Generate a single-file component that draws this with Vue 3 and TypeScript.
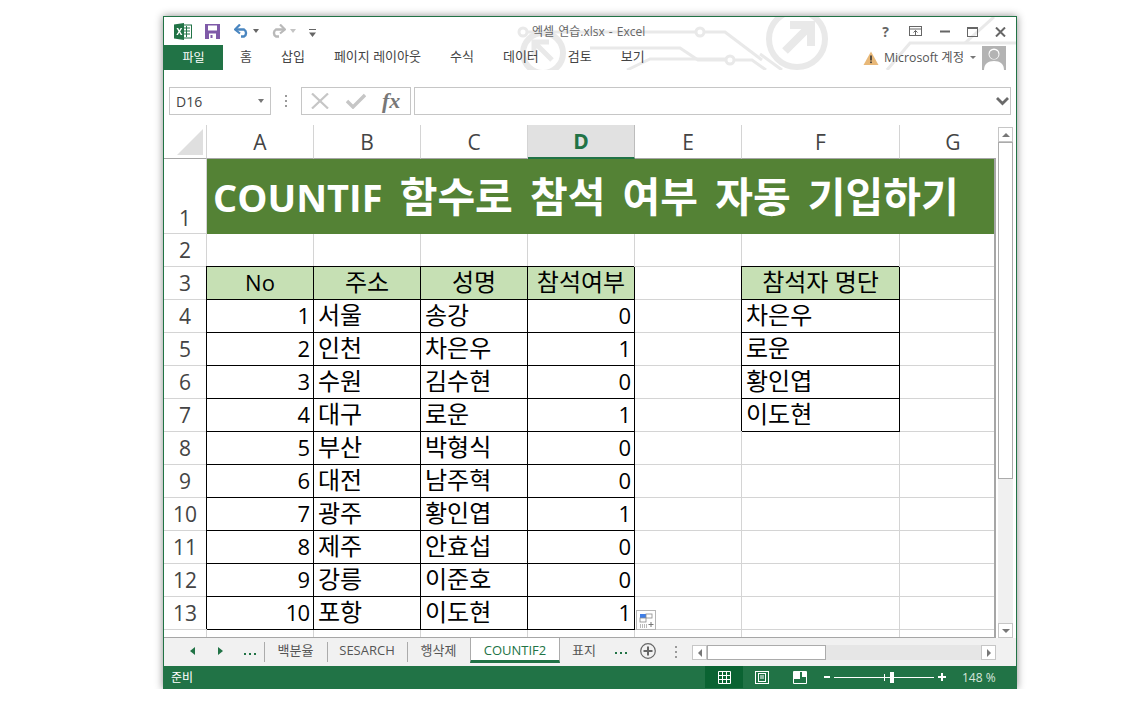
<template>
  <div class="page">
    <div class="window">
      <svg class="circuit" width="852" height="53" viewBox="164 17 852 53" fill="none" stroke="#e9e9e9">
        <g stroke-width="3">
          <circle cx="523" cy="32" r="4" />
          <path d="M527 32H696" />
          <circle cx="700" cy="32" r="4" />
          <path d="M704 32H725L762 60" />
          <path d="M590 48H680L698 60H726" />
          <circle cx="730" cy="60" r="4" />
          <path d="M734 60H752L766 70" />
          <path d="M627 70L650 59H726" />
          <path d="M887 70L910 43H1016" />
          <path d="M965 43L994 17" />
          <path d="M760 54L782 70" />
        </g>
        <circle cx="543" cy="53" r="20" stroke-width="6" />
        <path d="M552 60L536 44M534 56V42H549" stroke-width="5" />
        <circle cx="797" cy="39" r="28" stroke-width="6" />
        <path d="M785 51L809 27M790 25H811V46" stroke-width="8" />
      </svg>

      <div class="titlebar">
        <div class="quick">
          <svg class="ico-xl" width="18" height="17" viewBox="0 0 18 17">
            <rect x="7" y="2" width="10.5" height="13" fill="#fff" stroke="#217346" />
            <path d="M10 5h6M10 8h6M10 11h6M12.5 3v11" stroke="#217346" />
            <path d="M0 1.5L10 0v17L0 15.5z" fill="#217346" />
            <path d="M2.5 5l2 3.4-2.2 3.6h1.6l1.4-2.5 1.4 2.5h1.7L6.2 8.4 8.2 5H6.6L5.4 7.2 4.2 5z" fill="#fff" />
          </svg>
          <svg class="ico-save" width="15" height="15" viewBox="0 0 15 15">
            <path d="M0 0h15v15H0z" fill="#7f5aa8" />
            <rect x="3" y="1.5" width="9" height="5" fill="#fff" />
            <rect x="4" y="9.5" width="7" height="5.5" fill="#fff" />
            <rect x="5.5" y="11" width="2" height="3" fill="#7f5aa8" />
          </svg>
          <svg class="ico-undo" width="16" height="14" viewBox="0 0 16 14" fill="none">
            <path d="M2 5.500H10A4 4 0 0 1 10 12.500H7" stroke="#4a86c0" stroke-width="2.400" />
            <path d="M6 0.500L1 5.500L6 9.500" stroke="#4a86c0" stroke-width="2.200" />
          </svg>
          <span class="caret dark"></span>
          <svg class="ico-redo" width="16" height="14" viewBox="0 0 16 14" fill="none">
            <path d="M14 5.500H6A4 4 0 0 0 6 12.500H9" stroke="#b9b9b9" stroke-width="2.400" />
            <path d="M10 0.500L15 5.500L10 9.500" stroke="#b9b9b9" stroke-width="2.200" />
          </svg>
          <span class="caret light"></span>
          <svg class="ico-more" width="7" height="8" viewBox="0 0 7 8">
            <path d="M0 0h7v1H0zM0 3.500h7L3.500 8z" fill="#666" />
          </svg>
        </div>
        <div class="doc-title">엑셀 연습.xlsx - Excel</div>
        <div class="winbtns">
          <span class="help">?</span>
          <svg width="14" height="11" viewBox="0 0 14 11" fill="none" stroke="#666">
            <rect x="0.500" y="0.500" width="12" height="9" />
            <path d="M0.500 3H12.500" />
            <path d="M6.500 9V4.500M4.500 6.500l2-2 2 2" />
          </svg>
          <svg width="10" height="3" viewBox="0 0 10 3"><rect width="10" height="2" y="0.500" fill="#666" /></svg>
          <svg width="11" height="10" viewBox="0 0 11 10" fill="none" stroke="#666">
            <rect x="0.500" y="0.500" width="10" height="9" />
            <path d="M0 1.500H11" />
          </svg>
          <svg width="11" height="10" viewBox="0 0 11 10" fill="none" stroke="#666" stroke-width="2">
            <path d="M1 0.500L10 9.500M10 0.500L1 9.500" />
          </svg>
        </div>
      </div>

      <div class="ribbon">
        <div class="file-tab">파일</div>
        <div class="ribbon-tabs">
          <span v-for="t in ribbonTabs" :key="t">{{ t }}</span>
        </div>
        <div class="account">
          <svg width="16" height="14" viewBox="0 0 16 14">
            <path d="M8 0.500L15.500 14H0.500z" fill="#e8b878" />
            <rect x="7.200" y="4.500" width="1.600" height="5" fill="#333" />
            <rect x="7.200" y="10.500" width="1.600" height="1.600" fill="#333" />
          </svg>
          <span class="acc-name">Microsoft 계정</span>
          <span class="caret small"></span>
          <svg class="avatar" width="24" height="24" viewBox="0 0 24 24">
            <rect width="24" height="24" fill="#b3b3b3" />
            <circle cx="12" cy="8" r="5.500" fill="#fff" />
            <path d="M2 24c0-6 4-9 10-9s10 3 10 9z" fill="#fff" />
            <circle cx="12" cy="8.500" r="4.500" fill="#b3b3b3" />
          </svg>
        </div>
      </div>

      <div class="formula">
        <div class="namebox">
          <span>D16</span>
          <span class="caret"></span>
        </div>
        <div class="grip"><i></i><i></i><i></i></div>
        <div class="fbtns">
          <svg width="18" height="16" viewBox="0 0 18 16" fill="none" stroke="#c6c6c6" stroke-width="2.200">
            <path d="M1 0.500L17 15.500M17 0.500L1 15.500" />
          </svg>
          <svg width="20" height="16" viewBox="0 0 20 16" fill="none" stroke="#c6c6c6" stroke-width="3.400">
            <path d="M1 8L7 14L19 2" />
          </svg>
          <span class="fx">fx</span>
        </div>
        <div class="finput">
          <svg width="13" height="9" viewBox="0 0 13 9" fill="none" stroke="#6a6a6a" stroke-width="2.800">
            <path d="M1 1L6.500 6.500L12 1" />
          </svg>
        </div>
      </div>

      <div class="middle">
        <div class="sheet">
          <div class="row head">
            <div class="corner"><span class="tri"></span></div>
            <div v-for="c in columns" :key="c" class="colhead" :class="{ sel: c === 'D' }">{{ c }}</div>
          </div>

          <div class="row title-row">
            <div class="rowhead bottom">1</div>
            <div class="title-cell"><span class="title-latin">COUNTIF</span> 함수로 참석 여부 자동 기입하기</div>
          </div>

          <div v-for="r in rows" :key="r.n" class="row">
            <div class="rowhead">{{ r.n }}</div>
            <div
              v-for="(c, i) in r.cells"
              :key="i"
              class="cell"
              :class="[c.kind, { boxed: c.boxed }]"
            >{{ c.text }}</div>
          </div>

          <div class="row last">
            <div class="rowhead"></div>
            <div v-for="c in columns" :key="c" class="cell"></div>
          </div>

          <div class="edge"></div>

          <div class="paste">
            <svg width="17" height="17" viewBox="0 0 17 17">
              <rect x="2" y="2" width="6" height="4" fill="#3f7fe8" />
              <rect x="8" y="2" width="6" height="4" fill="#fff" stroke="#8a8a8a" stroke-width="0.800" />
              <rect x="2" y="6" width="6" height="4" fill="#fff" stroke="#8a8a8a" stroke-width="0.800" />
              <path d="M2 13h1M4 13h1M6 13h1M8 13h1M2 15h1M4 15h1M6 15h1M8 15h1" stroke="#777" />
              <path d="M13 10v5M10.500 12.500h5" stroke="#777" />
            </svg>
          </div>
        </div>

        <div class="vscroll">
          <div class="sbtn"><span class="tri-up"></span></div>
          <div class="vthumb"></div>
          <div class="vtrack"></div>
          <div class="sbtn"><span class="tri-down"></span></div>
        </div>
      </div>

      <div class="tabbar">
        <div class="tab-nav">
          <span class="nav-l"></span>
          <span class="nav-r"></span>
          <span class="dots"><i></i><i></i><i></i></span>
        </div>
        <div
          v-for="t in sheets"
          :key="t.name"
          class="sheet-tab"
          :class="{ active: t.active, plain: t.plain }"
          :style="{ width: t.w + 'px' }"
        >{{ t.name }}</div>
        <span class="dots after"><i></i><i></i><i></i></span>
        <svg class="plus" width="16" height="16" viewBox="0 0 16 16" fill="none" stroke="#666">
          <circle cx="8" cy="8" r="7.300" stroke-width="1.200" />
          <path d="M8 3.500v9M3.500 8h9" stroke-width="2" />
        </svg>
        <div class="grip tabgrip"><i></i><i></i><i></i></div>
        <div class="hscroll">
          <div class="sbtn h"><span class="tri-left"></span></div>
          <div class="hthumb"></div>
          <div class="htrack"></div>
          <div class="sbtn h"><span class="tri-right"></span></div>
        </div>
      </div>

      <div class="status">
        <span class="ready">준비</span>
        <div class="views">
          <div class="view on">
            <svg width="13" height="13" viewBox="0 0 13 13" fill="none" stroke="#fff">
              <path d="M0.500 0.500h12v12h-12zM0.500 4.500h12M0.500 8.500h12M4.500 0.500v12M8.500 0.500v12" />
            </svg>
          </div>
          <div class="view">
            <svg width="14" height="13" viewBox="0 0 14 13" fill="none" stroke="#fff">
              <rect x="0.500" y="0.500" width="13" height="12" />
              <rect x="3.500" y="2.500" width="7" height="8" />
              <path d="M5 5h4M5 7h4" />
            </svg>
          </div>
          <div class="view">
            <svg width="14" height="13" viewBox="0 0 14 13">
              <path d="M0.500 0.500h13v12h-13z" fill="none" stroke="#fff" />
              <path d="M1 0h6v8H1zM9 0h4v6H9z" fill="#fff" />
            </svg>
          </div>
        </div>
        <div class="zoom">
          <span class="zbtn minus"></span>
          <div class="slider"><i class="tick"></i><i class="knob"></i></div>
          <span class="zbtn pluss"></span>
          <span class="pct">148 %</span>
        </div>
      </div>
    </div>
  </div>
</template>

<script setup lang="ts">
type Cell = { text: string; kind?: string; boxed?: boolean }

const ribbonTabs = ['홈', '삽입', '페이지 레이아웃', '수식', '데이터', '검토', '보기']
const columns = ['A', 'B', 'C', 'D', 'E', 'F', 'G']

const people = [
  ['서울', '송강', 0],
  ['인천', '차은우', 1],
  ['수원', '김수현', 0],
  ['대구', '로운', 1],
  ['부산', '박형식', 0],
  ['대전', '남주혁', 0],
  ['광주', '황인엽', 1],
  ['제주', '안효섭', 0],
  ['강릉', '이준호', 0],
  ['포항', '이도현', 1],
] as const

const attendees = ['차은우', '로운', '황인엽', '이도현']

const blank = (): Cell => ({ text: '' })

const rows: { n: number; cells: Cell[] }[] = [
  { n: 2, cells: columns.map(blank) },
  {
    n: 3,
    cells: [
      { text: 'No', kind: 'hd latin', boxed: true },
      { text: '주소', kind: 'hd', boxed: true },
      { text: '성명', kind: 'hd', boxed: true },
      { text: '참석여부', kind: 'hd', boxed: true },
      blank(),
      { text: '참석자 명단', kind: 'hd', boxed: true },
      blank(),
    ],
  },
  ...people.map((p, i) => ({
    n: i + 4,
    cells: [
      { text: String(i + 1), kind: 'num', boxed: true },
      { text: p[0], boxed: true },
      { text: p[1], boxed: true },
      { text: String(p[2]), kind: 'num', boxed: true },
      blank(),
      attendees[i] ? { text: attendees[i], boxed: true } : blank(),
      blank(),
    ],
  })),
]

const sheets = [
  { name: '백분율', w: 63 },
  { name: 'SESARCH', w: 80 },
  { name: '행삭제', w: 63 },
  { name: 'COUNTIF2', w: 90, active: true },
  { name: '표지', w: 48, plain: true },
]
</script>

<style scoped>
.page {
  padding: 16px 0 0 163px;
  font-family: "Open Sans", "Noto Sans CJK KR", sans-serif;
}

.window {
  position: relative;
  width: 854px;
  height: 673px;
  box-sizing: border-box;
  border: 1px solid #217346;
  background: #fff;
  box-shadow: 0 0 8px rgba(0, 0, 0, 0.45);
  display: flex;
  flex-direction: column;
}

.circuit {
  position: absolute;
  left: 0;
  top: 0;
}

.titlebar {
  position: relative;
  height: 28px;
  flex: none;
  display: flex;
  align-items: center;
}

.quick {
  display: flex;
  align-items: center;
  padding-left: 10px;
  width: 340px;
}

.ico-save {
  margin-left: 13px;
}

.ico-undo {
  margin-left: 14px;
}

.ico-redo {
  margin-left: 11px;
}

.ico-more {
  margin-left: 13px;
  margin-top: 3px;
}

.caret {
  width: 0;
  height: 0;
  border-left: 3.500px solid transparent;
  border-right: 3.500px solid transparent;
  border-top: 4px solid #777;
}

.caret.dark {
  margin-left: 3px;
  border-top-color: #666;
}

.caret.light {
  margin-left: 4px;
  border-top-color: #c4c4c4;
}

.caret.small {
  margin-left: 6px;
  border-left-width: 3px;
  border-right-width: 3px;
  border-top-width: 3px;
}

.doc-title {
  position: absolute;
  left: 368px;
  top: 7px;
  font-size: 12px;
  line-height: 16px;
  word-spacing: 1px;
  color: #666;
  white-space: nowrap;
}

.winbtns {
  position: absolute;
  right: 10px;
  top: 8px;
  display: flex;
  align-items: center;
  gap: 17px;
}

.help {
  font-size: 14px;
  font-weight: 700;
  color: #666;
  line-height: 13px;
  margin-right: 3px;
}

.ribbon {
  position: relative;
  height: 25px;
  flex: none;
  display: flex;
  align-items: center;
}

.file-tab {
  width: 59px;
  height: 25px;
  background: #217346;
  color: #fff;
  font-size: 12px;
  line-height: 25px;
  text-align: center;
  flex: none;
}

.ribbon-tabs {
  display: flex;
  gap: 29px;
  padding-left: 17px;
  margin-top: -4px;
  font-size: 13px;
  color: #444;
  white-space: nowrap;
}

.account {
  position: absolute;
  right: 10px;
  top: 0;
  height: 25px;
  display: flex;
  align-items: center;
  font-size: 12.300px;
  color: #555;
}

.acc-name {
  margin-left: 5px;
  margin-top: -2px;
}

.avatar {
  margin-left: 6px;
}

.formula {
  flex: none;
  height: 28px;
  margin-top: 17px;
  display: flex;
  align-items: stretch;
  padding-left: 5px;
}

.namebox {
  width: 102px;
  box-sizing: border-box;
  border: 1px solid #c6c6c6;
  display: flex;
  align-items: center;
  justify-content: space-between;
  padding: 0 6px;
  font-size: 14px;
  color: #444;
}

.grip {
  display: flex;
  flex-direction: column;
  justify-content: center;
  align-items: center;
  gap: 3px;
  width: 30px;
}

.grip i {
  width: 2px;
  height: 2px;
  background: #9a9a9a;
}

.fbtns {
  width: 110px;
  box-sizing: border-box;
  border: 1px solid #c6c6c6;
  display: flex;
  align-items: center;
  gap: 17px;
  padding-left: 9px;
}

.fx {
  font-family: "Liberation Serif", serif;
  font-style: italic;
  font-weight: 700;
  font-size: 22px;
  line-height: 22px;
  color: #777;
  margin-left: -1px;
}

.finput {
  width: 597px;
  margin-left: 3px;
  box-sizing: border-box;
  border: 1px solid #c6c6c6;
  display: flex;
  align-items: center;
  justify-content: flex-end;
  padding-right: 1px;
}

.middle {
  flex: none;
  height: 513px;
  margin-top: 10px;
  display: flex;
}

.sheet {
  position: relative;
  width: 832px;
  flex: none;
  height: 513px;
  box-sizing: border-box;
  border-bottom: 1px solid #a6a6a6;
  overflow: hidden;
}

.edge {
  position: absolute;
  right: 0;
  top: 33px;
  bottom: 0;
  width: 2px;
  background: #a6a6a6;
}

.row {
  display: grid;
  grid-template-columns: 43px repeat(5, 107px) 158px 107px;
  height: 33px;
}

.row.head {
  height: 34px;
}

.row.last {
  height: 9px;
}

.corner {
  position: relative;
  border-right: 1px solid #d4d4d4;
  border-bottom: 1px solid #a6a6a6;
}

.tri {
  position: absolute;
  right: 3px;
  bottom: 3px;
  width: 0;
  height: 0;
  border-left: 26px solid transparent;
  border-bottom: 26px solid #dfdfdf;
}

.colhead {
  box-sizing: border-box;
  border-right: 1px solid #d4d4d4;
  border-bottom: 1px solid #a6a6a6;
  font-size: 21px;
  color: #444;
  display: flex;
  align-items: center;
  justify-content: center;
}

.colhead.sel {
  background: #e1e1e1;
  color: #217346;
  font-weight: 700;
  border-right-color: #bcbcbc;
  border-bottom: 2px solid #217346;
}

.rowhead {
  box-sizing: border-box;
  border-right: 1px solid #d4d4d4;
  border-bottom: 1px solid #d4d4d4;
  font-size: 21px;
  color: #444;
  display: flex;
  align-items: center;
  justify-content: center;
  line-height: 1;
}

.rowhead.bottom {
  align-items: flex-end;
  padding-bottom: 4px;
}

.title-row {
  height: 75px;
}

.title-cell {
  grid-column: 2 / 9;
  background: #548235;
  color: #fff;
  font-size: 41px;
  font-weight: 700;
  line-height: 1;
  padding: 17px 0 0 6px;
  white-space: nowrap;
  word-spacing: 6.500px;
  box-sizing: border-box;
}

.title-latin {
  font-size: 38px;
}

.cell {
  box-sizing: border-box;
  border-right: 1px solid #d4d4d4;
  border-bottom: 1px solid #d4d4d4;
  font-size: 24px;
  line-height: 1;
  color: #000;
  display: flex;
  align-items: center;
  padding: 0 0 3px 4px;
  white-space: nowrap;
}

.cell.boxed {
  border-right-color: #000;
  border-bottom-color: #000;
  box-shadow: -1px -1px 0 #000;
}

.cell.hd {
  background: #c6e0b4;
  justify-content: center;
  padding-left: 0;
}

.cell.latin {
  font-size: 22px;
}

.cell.num {
  font-size: 22px;
  letter-spacing: -1px;
  justify-content: flex-end;
  padding: 0 4px 2px 0;
}

.paste {
  position: absolute;
  left: 472px;
  top: 485px;
  width: 20px;
  height: 20px;
  box-sizing: border-box;
  border: 1px solid #b5b5b5;
  background: #fff;
  display: flex;
  align-items: center;
  justify-content: center;
}

.vscroll {
  margin-left: 2px;
  width: 15px;
  padding-top: 2px;
  display: flex;
  flex-direction: column;
  height: 513px;
  box-sizing: border-box;
}

.sbtn {
  flex: none;
  width: 15px;
  height: 15px;
  box-sizing: border-box;
  border: 1px solid #c6c6c6;
  background: #fff;
  display: flex;
  align-items: center;
  justify-content: center;
}

.vthumb {
  height: 337px;
  flex: none;
  box-sizing: border-box;
  border: 1px solid #ababab;
  background: #fff;
}

.vtrack {
  flex: 1;
  background: #f0f0f0;
}

.tri-up,
.tri-down {
  width: 0;
  height: 0;
  border-left: 4px solid transparent;
  border-right: 4px solid transparent;
}

.tri-up {
  border-bottom: 4px solid #777;
}

.tri-down {
  border-top: 4px solid #777;
}

.tri-left,
.tri-right {
  width: 0;
  height: 0;
  border-top: 4px solid transparent;
  border-bottom: 4px solid transparent;
}

.tri-left {
  border-right: 4px solid #777;
}

.tri-right {
  border-left: 4px solid #777;
}

.tabbar {
  flex: none;
  height: 28px;
  background: #f1f1f1;
  display: flex;
  align-items: flex-start;
  font-size: 13px;
  color: #555;
  position: relative;
}

.tab-nav {
  width: 100px;
  height: 26px;
  display: flex;
  align-items: center;
  flex: none;
}

.nav-l {
  margin-left: 26px;
  border-top: 4px solid transparent;
  border-bottom: 4px solid transparent;
  border-right: 5px solid #217346;
}

.nav-r {
  margin-left: 23px;
  border-top: 4px solid transparent;
  border-bottom: 4px solid transparent;
  border-left: 5px solid #217346;
}

.dots {
  display: flex;
  gap: 3px;
  margin-left: 21px;
  margin-top: 5px;
}

.dots i {
  width: 2px;
  height: 2px;
  background: #217346;
}

.dots.after {
  margin: 14px 0 0 7px;
}

.sheet-tab {
  height: 24px;
  box-sizing: border-box;
  line-height: 25px;
  text-align: center;
  flex: none;
  position: relative;
  white-space: nowrap;
}

.sheet-tab:not(.active):not(.plain)::before {
  content: "";
  position: absolute;
  left: 0;
  top: 4px;
  width: 1px;
  height: 20px;
  background: #ababab;
}

.sheet-tab.active {
  background: #fff;
  color: #217346;
  height: 25px;
  border-left: 1px solid #ababab;
  border-right: 1px solid #ababab;
  border-bottom: 3px solid #217346;
}

.plus {
  flex: none;
  margin: 5px 0 0 13px;
}

.tabgrip {
  width: 40px;
  height: 24px;
  margin-top: 2px;
  flex: none;
}

.hscroll {
  position: absolute;
  left: 528px;
  top: 7px;
  width: 304px;
  display: flex;
}

.sbtn.h {
  width: 15px;
}

.hthumb {
  width: 119px;
  height: 15px;
  box-sizing: border-box;
  border: 1px solid #ababab;
  background: #fff;
}

.htrack {
  flex: 1;
  height: 15px;
  background: #e6e6e6;
}

.status {
  flex: 1;
  background: #217346;
  color: #fff;
  display: flex;
  align-items: center;
  font-size: 12px;
  position: relative;
}

.ready {
  margin-left: 7px;
}

.views {
  position: absolute;
  left: 541px;
  top: 0;
  height: 22px;
  display: flex;
}

.view {
  width: 38px;
  height: 22px;
  display: flex;
  align-items: center;
  justify-content: center;
}

.view.on {
  background: #0a6332;
}

.zoom {
  position: absolute;
  left: 660px;
  top: 0;
  height: 22px;
  display: flex;
  align-items: center;
}

.zbtn {
  position: relative;
  width: 8px;
  height: 8px;
}

.zbtn.minus {
  margin-right: 2px;
}

.zbtn::before {
  content: "";
  position: absolute;
  left: 0;
  top: 3px;
  width: 6px;
  height: 2px;
  background: #fff;
}

.zbtn.pluss::before {
  width: 8px;
}

.zbtn.pluss::after {
  content: "";
  position: absolute;
  left: 3px;
  top: 0;
  width: 2px;
  height: 8px;
  background: #fff;
}

.slider {
  position: relative;
  width: 100px;
  height: 1px;
  margin: 0 4px 0 0;
  background: #fff;
}

.tick {
  position: absolute;
  left: 50px;
  top: -3px;
  width: 1px;
  height: 7px;
  background: #fff;
}

.knob {
  position: absolute;
  left: 56px;
  top: -5px;
  width: 4px;
  height: 11px;
  background: #fff;
}

.pct {
  margin-left: 16px;
  font-size: 12px;
  color: #d8e6dd;
}
</style>

<style>
body {
  background: #fff;
}
</style>
